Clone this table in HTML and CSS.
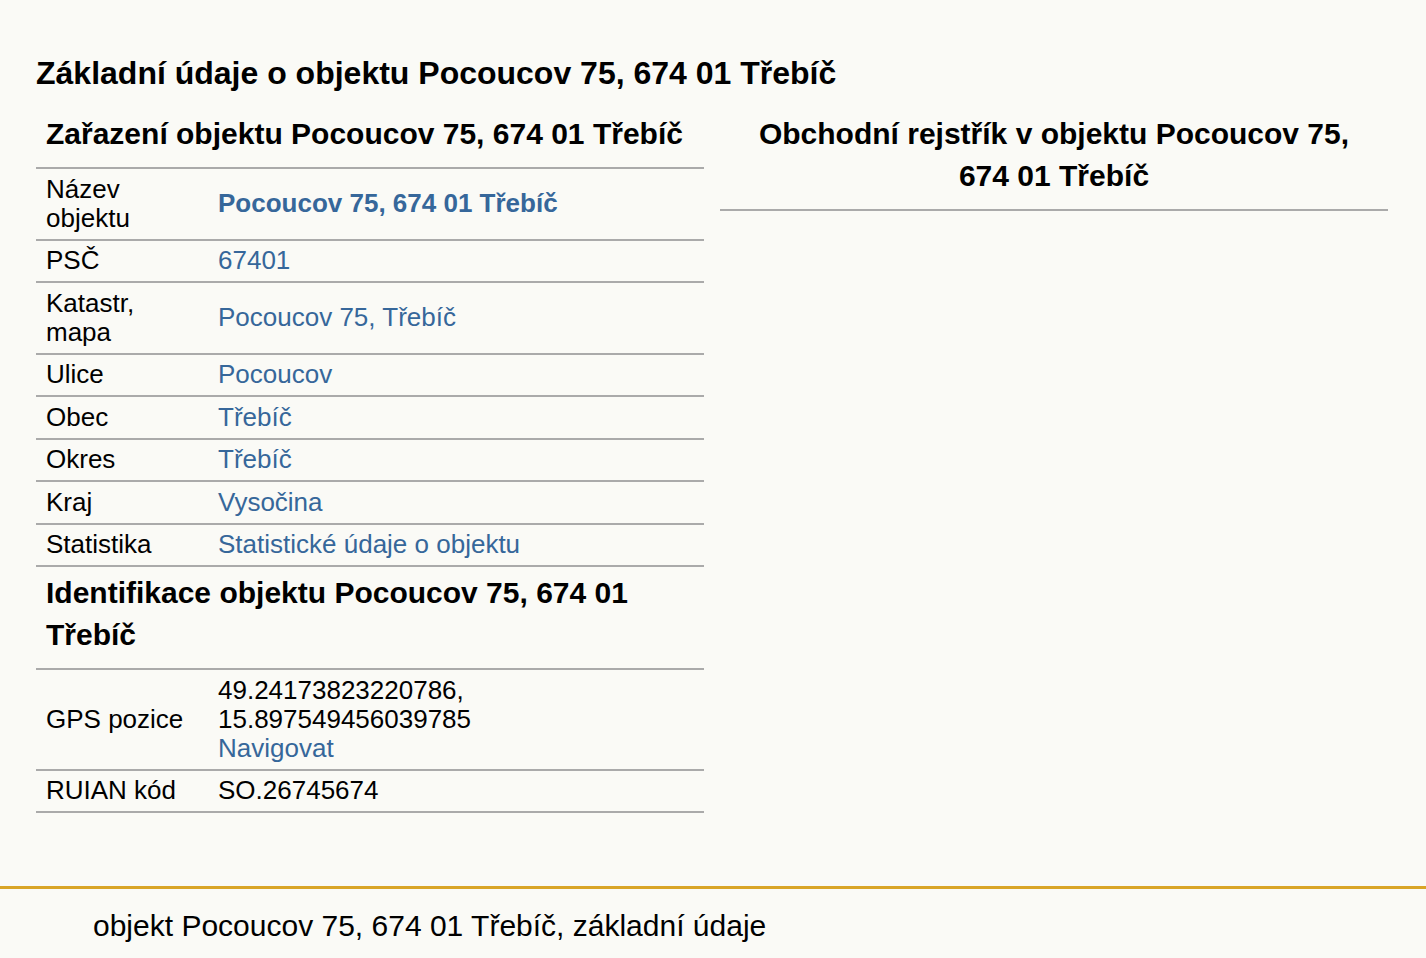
FILE: index.html
```html
<!DOCTYPE html>
<html lang="cs">
<head>
  <meta charset="UTF-8">
  <title>Pocoucov 75, 674 01 Třebíč</title>
  <meta name="viewport" content="width=device-width, initial-scale=1.0">
  <link rel="stylesheet" href="styles.css">
</head>
<body>
  <div class="page">
    <h1>Základní údaje o objektu Pocoucov 75, 674 01 Třebíč</h1>

    <div class="columns">
      <div class="col">
        <table class="info">
          <tr><th colspan="2" class="sec">Zařazení objektu Pocoucov 75, 674 01 Třebíč</th></tr>
          <tr><td class="lbl">Název objektu</td><td><a href="#" class="strong">Pocoucov 75, 674 01 Třebíč</a></td></tr>
          <tr><td class="lbl">PSČ</td><td><a href="#">67401</a></td></tr>
          <tr><td class="lbl">Katastr, mapa</td><td><a href="#">Pocoucov 75, Třebíč</a></td></tr>
          <tr><td class="lbl">Ulice</td><td><a href="#">Pocoucov</a></td></tr>
          <tr><td class="lbl">Obec</td><td><a href="#">Třebíč</a></td></tr>
          <tr><td class="lbl">Okres</td><td><a href="#">Třebíč</a></td></tr>
          <tr><td class="lbl">Kraj</td><td><a href="#">Vysočina</a></td></tr>
          <tr><td class="lbl">Statistika</td><td><a href="#">Statistické údaje o objektu</a></td></tr>
          <tr><th colspan="2" class="sec">Identifikace objektu Pocoucov 75, 674 01 Třebíč</th></tr>
          <tr><td class="lbl">GPS pozice</td><td>49.24173823220786,<br>15.897549456039785<br><a href="#">Navigovat</a></td></tr>
          <tr><td class="lbl">RUIAN kód</td><td>SO.26745674</td></tr>
        </table>
      </div>

      <div class="col">
        <table class="info">
          <tr><th class="sec center">Obchodní rejstřík v objektu Pocoucov 75, 674 01 Třebíč</th></tr>
        </table>
      </div>
    </div>
  </div>

  <footer>objekt Pocoucov 75, 674 01 Třebíč, základní údaje</footer>
</body>
</html>
```

FILE: styles.css
```css
body {
  font-family: 'Liberation Sans', Arial, sans-serif;
  background: #fafaf6;
  color: #000;
  margin: 0;
  padding: 0;
}
.page {
  padding: 40px 30px 73px 28px;
}
h1 {
  font-size: 32px;
  margin: 14px 8px 16px 8px;
  line-height: 38px;
}
.columns {
  display: flex;
}
.col {
  flex: 1;
  padding: 0 8px;
}
.info {
  width: 100%;
  border-collapse: collapse;
  font-size: 26px;
  line-height: 29px;
}
.info td, .info th {
  border-bottom: 2px solid #aaa;
  padding: 5.75px 10px;
  vertical-align: middle;
}
.info th.sec {
  font-size: 30px;
  line-height: 42px;
  text-align: left;
  padding: 4.5px 10px 12.5px;
}
.info th.center {
  text-align: center;
  padding: 4.5px 24px 12.5px;
}
.lbl {
  width: 152px;
}
a {
  color: #36679a;
  text-decoration: none;
}
a.strong {
  font-weight: bold;
}
footer {
  border-top: 3px solid #d9a527;
  padding: 19px 93px 20px;
  font-size: 30px;
  line-height: 36px;
}
```
